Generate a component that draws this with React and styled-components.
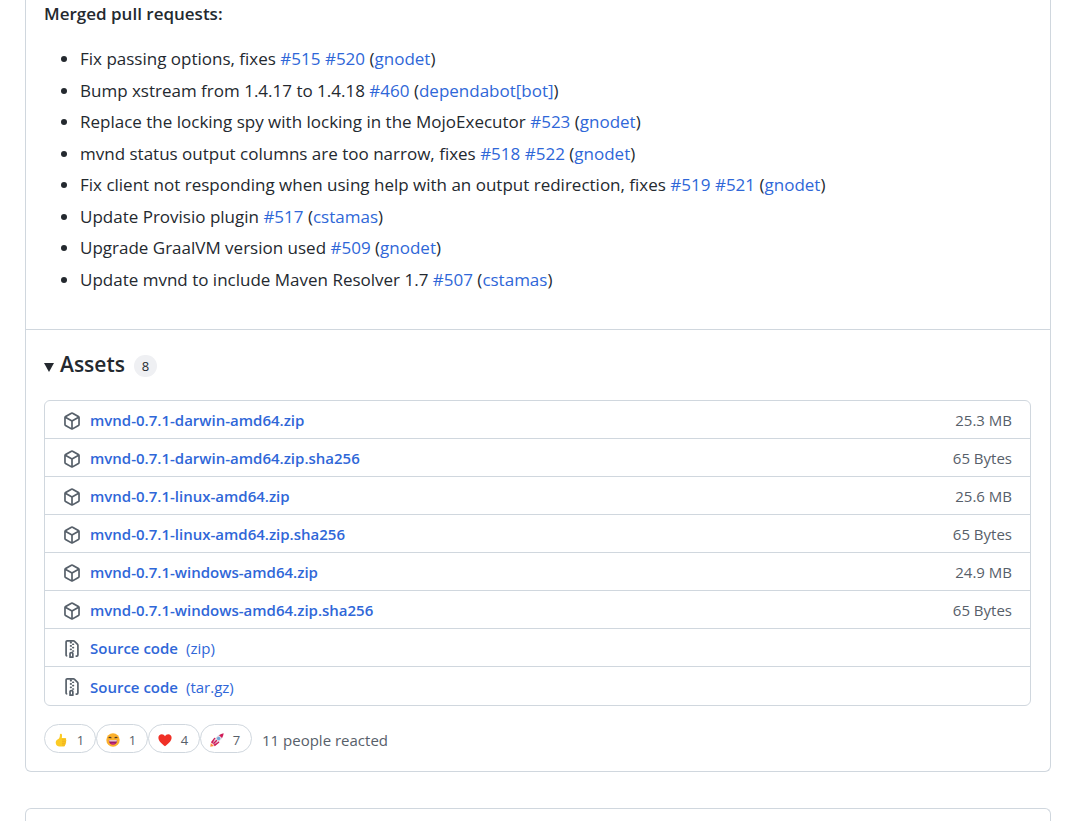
import styled, { createGlobalStyle } from 'styled-components';

const notes = [
  { text: 'Fix passing options, fixes', refs: ['#515', '#520'], author: 'gnodet' },
  {
    text: 'Bump xstream from 1.4.17 to 1.4.18',
    refs: ['#460'],
    author: 'dependabot[bot]',
  },
  {
    text: 'Replace the locking spy with locking in the MojoExecutor',
    refs: ['#523'],
    author: 'gnodet',
  },
  {
    text: 'mvnd status output columns are too narrow, fixes',
    refs: ['#518', '#522'],
    author: 'gnodet',
  },
  {
    text: 'Fix client not responding when using help with an output redirection, fixes',
    refs: ['#519', '#521'],
    author: 'gnodet',
  },
  { text: 'Update Provisio plugin', refs: ['#517'], author: 'cstamas' },
  { text: 'Upgrade GraalVM version used', refs: ['#509'], author: 'gnodet' },
  {
    text: 'Update mvnd to include Maven Resolver 1.7',
    refs: ['#507'],
    author: 'cstamas',
  },
];

const assets = [
  { name: 'mvnd-0.7.1-darwin-amd64.zip', size: '25.3 MB' },
  { name: 'mvnd-0.7.1-darwin-amd64.zip.sha256', size: '65 Bytes' },
  { name: 'mvnd-0.7.1-linux-amd64.zip', size: '25.6 MB' },
  { name: 'mvnd-0.7.1-linux-amd64.zip.sha256', size: '65 Bytes' },
  { name: 'mvnd-0.7.1-windows-amd64.zip', size: '24.9 MB' },
  { name: 'mvnd-0.7.1-windows-amd64.zip.sha256', size: '65 Bytes' },
  { name: 'Source code', format: '(zip)' },
  { name: 'Source code', format: '(tar.gz)' },
];

const PackageIcon = () => (
  <Icon viewBox="0 0 16 16" aria-hidden="true">
    <path d="m8.878.392 5.25 3.045c.54.314.872.89.872 1.514v6.098a1.75 1.75 0 0 1-.872 1.514l-5.25 3.045a1.75 1.75 0 0 1-1.756 0l-5.25-3.045A1.75 1.75 0 0 1 1 11.049V4.951c0-.624.332-1.201.872-1.514L7.122.392a1.75 1.75 0 0 1 1.756 0ZM7.875 1.69l-4.63 2.685L8 7.133l4.755-2.758-4.63-2.685a.248.248 0 0 0-.25 0ZM2.5 5.677v5.372c0 .09.047.171.125.216l4.625 2.683V8.432Zm6.25 8.271 4.625-2.683a.25.25 0 0 0 .125-.216V5.677L8.75 8.432Z" />
  </Icon>
);

const ZipIcon = () => (
  <Icon viewBox="0 0 16 16" aria-hidden="true">
    <path d="M3.5 1.75v11.5c0 .09.048.173.126.217a.75.75 0 0 1-.752 1.298A1.748 1.748 0 0 1 2 13.25V1.75C2 .784 2.784 0 3.75 0h5.586c.464 0 .909.185 1.237.513l2.914 2.914c.329.328.513.773.513 1.237v8.586A1.75 1.75 0 0 1 12.25 15h-.5a.75.75 0 0 1 0-1.5h.5a.25.25 0 0 0 .25-.25V4.664a.25.25 0 0 0-.073-.177L9.513 1.573a.25.25 0 0 0-.177-.073H7.25a.75.75 0 0 1 0 1.5h-.5a.75.75 0 0 1 0-1.5h-3a.25.25 0 0 0-.25.25Zm3.75 8.75h.5c.966 0 1.75.784 1.75 1.75v3a.75.75 0 0 1-.75.75h-2.5a.75.75 0 0 1-.75-.75v-3c0-.966.784-1.75 1.75-1.75ZM6 5.25a.75.75 0 0 1 .75-.75h.5a.75.75 0 0 1 0 1.5h-.5A.75.75 0 0 1 6 5.25Zm.75 2.25h.5a.75.75 0 0 1 0 1.5h-.5a.75.75 0 0 1 0-1.5ZM8 6.75A.75.75 0 0 1 8.75 6h.5a.75.75 0 0 1 0 1.5h-.5A.75.75 0 0 1 8 6.75ZM8.75 3h.5a.75.75 0 0 1 0 1.5h-.5a.75.75 0 0 1 0-1.5ZM8 9.75A.75.75 0 0 1 8.75 9h.5a.75.75 0 0 1 0 1.5h-.5A.75.75 0 0 1 8 9.75Zm-1 2.5v2.25h1v-2.25a.25.25 0 0 0-.25-.25h-.5a.25.25 0 0 0-.25.25Z" />
  </Icon>
);

const ThumbsUp = () => (
  <Emoji viewBox="0 0 14 14" aria-hidden="true">
    <path
      d="M5 5.6C5.8 4.4 6 3 5.9 1.6 5.9.3 7.8.3 8 1.8c.1 1.1 0 2.3-.2 3.2h3.5c1 0 1.2 1.2.6 1.7.7.5.6 1.5 0 1.9.5.6.3 1.4-.3 1.8.3.7 0 1.3-.6 1.6.1 1-.7 1.5-1.6 1.5H5.6C3.4 13.5 1.7 12 1.7 9.5 1.7 7.3 3.6 6.9 5 5.6Z"
      fill="#fccb25"
    />
    <path
      d="M8 6.9h3.9M8 8.7h3.9M8 10.4h3.5M8 12h3"
      stroke="#e7a51b"
      strokeWidth=".6"
    />
  </Emoji>
);

const Laugh = () => (
  <Emoji viewBox="0 0 14 14" aria-hidden="true">
    <circle cx="7" cy="7" r="6.7" fill="#fbb02d" />
    <path
      d="M2.8 5.2c.4-1.3 1.9-1.3 2.4 0M8.8 5.2c.5-1.3 2-1.3 2.4 0"
      fill="none"
      stroke="#46352b"
      strokeWidth="1.1"
    />
    <path d="M2.8 7.3h8.4c0 2.7-1.7 4.3-4.2 4.3S2.8 10 2.8 7.3Z" fill="#9b1d67" />
    <path d="M3.2 7.3h7.6v1.1H3.2Z" fill="#fff" />
    <path d="M4.6 10.7c1.3-1.1 3.5-1.1 4.8 0-1.3 1.2-3.5 1.2-4.8 0Z" fill="#d42c83" />
  </Emoji>
);

const Heart = () => (
  <Emoji viewBox="0 0 14 14" aria-hidden="true">
    <path
      d="M7 13.2C4.3 11.3.4 8 .4 4.7.4 2.7 1.9 1.2 3.8 1.2c1.4 0 2.6.8 3.2 2 .6-1.2 1.8-2 3.2-2 1.9 0 3.4 1.5 3.4 3.5 0 3.3-3.9 6.6-6.6 8.5Z"
      fill="#f03026"
    />
  </Emoji>
);

const Rocket = () => (
  <Emoji viewBox="0 0 14 14" aria-hidden="true">
    <path d="M.3 13.7.8 9.900l3.200 3Z" fill="#fb8b3c" />
    <path
      d="M.9 9.2 4.300 4.800l2.700.6-3.400 6ZM4.800 13.200l4.600-3.800-.8-2.400-6 3.600Z"
      fill="#d11a56"
    />
    <path
      d="M3.200 10C4.700 5.300 7.800 2 12.500 1.100c.5-.1.600 0 .5.5-.9 4.600-4.300 7.800-8.900 9.300Z"
      fill="#eadfe8"
      stroke="#c9bdd0"
      strokeWidth=".4"
    />
    <path
      d="M9 2.200C10.400 1.200 12 .7 13.700.3c-.3 1.700-.8 3.300-1.700 4.700Z"
      fill="#d11a56"
    />
    <circle cx="8.600" cy="5.500" r="1.700" fill="#72a9d8" />
    <path d="m3.400 10.700 3.400-3.400" stroke="#d11a56" strokeWidth="1.500" />
  </Emoji>
);

const reactions = [
  { label: 'thumbs up', icon: <ThumbsUp />, count: 1 },
  { label: 'laugh', icon: <Laugh />, count: 1 },
  { label: 'heart', icon: <Heart />, count: 4 },
  { label: 'rocket', icon: <Rocket />, count: 7 },
];

const App = () => {
  return (
    <Page>
      <GlobalStyle />
      <Release>
        <Notes>
          <h4>Merged pull requests:</h4>
          <ul>
            {notes.map((note) => (
              <li key={note.text}>
                {note.text}{' '}
                {note.refs.map((ref) => (
                  <span key={ref}>
                    <Link href={ref}>{ref}</Link>{' '}
                  </span>
                ))}
                (<Link href={`#${note.author}`}>{note.author}</Link>)
              </li>
            ))}
          </ul>
        </Notes>
        <Footer>
          <details open>
            <Summary>
              <Caret />
              <h3>Assets</h3>
              <Counter>{assets.length}</Counter>
            </Summary>
            <AssetList>
              {assets.map((asset) => (
                <AssetRow key={asset.name + asset.format}>
                  {asset.format ? <ZipIcon /> : <PackageIcon />}
                  <AssetLink href="#download">
                    <b>{asset.name}</b>
                    {asset.format && <span>{asset.format}</span>}
                  </AssetLink>
                  {asset.size && <Size>{asset.size}</Size>}
                </AssetRow>
              ))}
            </AssetList>
          </details>
          <Reactions>
            {reactions.map(({ label, icon, count }) => (
              <Reaction key={label} aria-label={`${label} ${count}`}>
                {icon}
                {count}
              </Reaction>
            ))}
            <p>11 people reacted</p>
          </Reactions>
        </Footer>
      </Release>
      <NextRelease />
    </Page>
  );
};

const GlobalStyle = createGlobalStyle`
  * {
    margin: 0;
    padding: 0;
    box-sizing: border-box;
  }
  body {
    background: #ffffff;
    color: #24292f;
    font-family: 'Open Sans', 'Noto Sans', sans-serif;
    font-size: 17px;
    line-height: 27px;
  }
`;

const Page = styled.main`
  display: flex;
  flex-direction: column;
  gap: 36px;
  min-height: 100vh;
  padding: 0 22px 0 25px;
`;

const Release = styled.article`
  border: 1px solid #d0d7de;
  border-top: none;
  border-radius: 0 0 6px 6px;
`;

const NextRelease = styled.article`
  flex: 1;
  border: 1px solid #d0d7de;
  border-bottom: none;
  border-radius: 6px 6px 0 0;
`;

const Notes = styled.section`
  padding: 0 18px 32px;
  border-bottom: 1px solid #d0d7de;
  h4 {
    font-size: 17px;
    font-weight: 600;
  }
  ul {
    display: grid;
    grid-auto-rows: 1fr;
    height: 252px;
    margin-top: 18px;
    padding-left: 36px;
  }
`;

const Link = styled.a`
  color: #2f67d8;
  text-decoration: none;
`;

const Footer = styled.section`
  padding: 18px 19px 18px 18px;
`;

const Summary = styled.summary`
  display: flex;
  align-items: center;
  margin-bottom: 20px;
  line-height: 32px;
  list-style: none;
  cursor: pointer;
  h3 {
    margin-left: 6px;
    font-size: 21px;
    font-weight: 600;
  }
`;

const Caret = styled.span`
  margin-top: 6px;
  border: 5px solid transparent;
  border-top: 9px solid #24292f;
  border-bottom: none;
`;

const Counter = styled.span`
  min-width: 23px;
  margin: 4px 0 0 9px;
  border-radius: 12px;
  background: #eff0f3;
  font-size: 13px;
  line-height: 22px;
  text-align: center;
`;

const AssetList = styled.ul`
  border: 1px solid #d0d7de;
  border-radius: 6px;
  list-style: none;
`;

const AssetRow = styled.li`
  display: flex;
  align-items: center;
  height: 38px;
  padding: 2px 18px 0;
  font-size: 15px;
  &:not(:last-child) {
    border-bottom: 1px solid #d0d7de;
  }
`;

const Icon = styled.svg`
  width: 18px;
  height: 18px;
  fill: #57606a;
`;

const AssetLink = styled(Link)`
  display: flex;
  gap: 8px;
  margin-left: 9px;
  b {
    font-weight: 600;
  }
`;

const Size = styled.span`
  margin-left: auto;
  color: #57606a;
`;

const Reactions = styled.div`
  display: flex;
  align-items: center;
  margin-top: 18px;
  color: #57606a;
  font-size: 15px;
  p {
    margin-left: 10px;
    padding-top: 4px;
    line-height: 25px;
  }
`;

const Reaction = styled.button`
  display: flex;
  align-items: center;
  justify-content: center;
  gap: 9px;
  width: 52px;
  height: 29px;
  padding: 2px 2px 0 0;
  border: 1px solid #d0d7de;
  border-radius: 15px;
  background: #ffffff;
  color: #57606a;
  font-family: inherit;
  font-size: 13px;
`;

const Emoji = styled.svg`
  width: 14px;
  height: 14px;
`;

export default App;
